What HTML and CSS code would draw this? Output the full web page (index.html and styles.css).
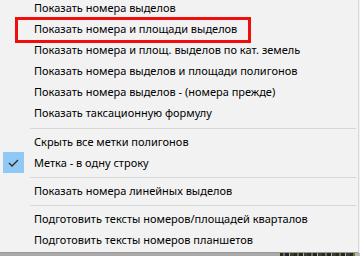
FILE: index.html
```html
<!DOCTYPE html>
<html lang="ru">
<head>
<meta charset="utf-8">
<title>Меню</title>
<link rel="stylesheet" href="styles.css">
</head>
<body>
<div class="screen">
  <div class="menu">
    <div class="item"><span class="gutter"></span><span class="label">Показать номера выделов</span></div>
    <div class="item"><span class="gutter"></span><span class="label">Показать номера и площади выделов</span></div>
    <div class="item"><span class="gutter"></span><span class="label">Показать номера и площ. выделов по кат. земель</span></div>
    <div class="item"><span class="gutter"></span><span class="label">Показать номера выделов и площади полигонов</span></div>
    <div class="item"><span class="gutter"></span><span class="label">Показать номера выделов - (номера прежде)</span></div>
    <div class="item"><span class="gutter"></span><span class="label">Показать таксационную формулу</span></div>
    <div class="sep sep-first"><span class="line"></span></div>
    <div class="item"><span class="gutter"></span><span class="label">Скрыть все метки полигонов</span></div>
    <div class="item"><span class="gutter"><span class="check"><svg width="11" height="8" viewBox="0 0 11 8"><path d="M1 4 L4 7 L10 1" fill="none" stroke="#2b2b2b" stroke-width="1.3"/></svg></span></span><span class="label">Метка - в одну строку</span></div>
    <div class="sep"><span class="line"></span></div>
    <div class="item"><span class="gutter"></span><span class="label">Показать номера линейных выделов</span></div>
    <div class="sep"><span class="line"></span></div>
    <div class="item"><span class="gutter"></span><span class="label">Подготовить тексты номеров/площадей кварталов</span></div>
    <div class="item"><span class="gutter"></span><span class="label">Подготовить тексты номеров планшетов</span></div>
  </div>
  <div class="below"></div>
  <div class="mark"></div>
</div>
</body>
</html>
```
FILE: styles.css
```css
html, body {
  margin: 0;
  padding: 0;
}
body {
  width: 360px;
  height: 256px;
  overflow: hidden;
  background: #f2f2f2;
  font-family: "Noto Sans", "Open Sans", sans-serif;
  font-size: 11px;
  color: #000;
}
.screen {
  position: relative;
  width: 360px;
  height: 256px;
  overflow: hidden;
}
.menu {
  margin-top: -3px;
  width: 358px;
  background: #f2f2f2;
  border-right: 1px solid #dadada;
  border-bottom: 1px solid #9a9a9a;
  padding-bottom: 2px;
}
.item {
  display: flex;
  align-items: center;
  height: 21px;
  line-height: 21px;
  white-space: nowrap;
}
.gutter {
  width: 34px;
  height: 21px;
  display: flex;
  align-items: center;
  flex: none;
}
.check {
  margin-left: 3px;
  width: 21px;
  height: 21px;
  background: #90c8f6;
  display: flex;
  align-items: center;
  justify-content: center;
}
.sep {
  height: 7px;
  padding-left: 30px;
  box-sizing: border-box;
  padding-top: 4px;
}
.sep-first {
  height: 8px;
  padding-top: 5px;
}
.line {
  display: block;
  height: 1px;
  background: #d7d7d7;
  margin-right: 2px;
}
.below {
  height: 4px;
  background:
    linear-gradient(90deg, #a9a9a9 0, #a9a9a9 280px, transparent 280px, transparent 355px, #b5b5b5 355px),
    repeating-linear-gradient(90deg, #2a2a1e 0, #2a2a1e 3px, #6b7a2a 3px, #6b7a2a 5px, #1d2240 5px, #1d2240 9px, #c9b64a 9px, #c9b64a 10px, #3a3a3a 10px, #3a3a3a 14px);
}
.mark {
  position: absolute;
  left: 15px;
  top: 17px;
  width: 230px;
  height: 20px;
  border: 3px solid #f20d0d;
}
```
